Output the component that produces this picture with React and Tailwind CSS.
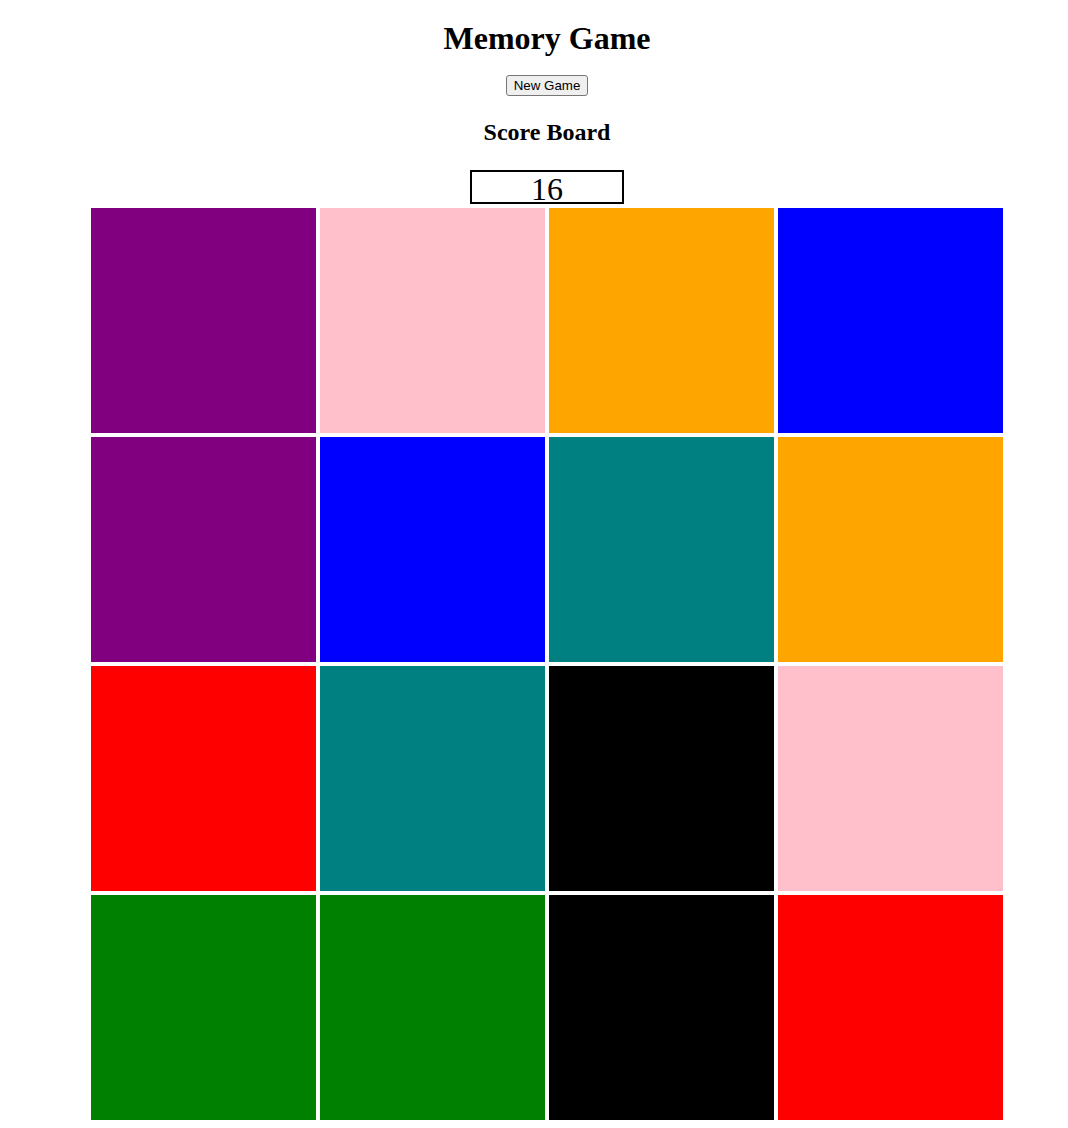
const cards = [
  'bg-[#800080]', 'bg-[#ffc0cb]', 'bg-[#ffa500]', 'bg-[#0000ff]',
  'bg-[#800080]', 'bg-[#0000ff]', 'bg-[#008080]', 'bg-[#ffa500]',
  'bg-[#ff0000]', 'bg-[#008080]', 'bg-[#000000]', 'bg-[#ffc0cb]',
  'bg-[#008000]', 'bg-[#008000]', 'bg-[#000000]', 'bg-[#ff0000]',
];

const App = () => {
  return (
    <div className="min-h-screen bg-white text-black font-['Liberation_Serif',serif]">
      <div className="ml-[26px] flex flex-col items-center">
        {/* Header */}
        <h1 className="pt-[20px] text-[32px] leading-[37px] font-bold">Memory Game</h1>
        <button className="mt-[18px] h-[21px] px-[7px] text-[13.33px] leading-[15px] font-['Liberation_Sans',sans-serif] bg-[#efefef] border border-[#767676] rounded-[3px]">
          New Game
        </button>

        {/* Score */}
        <h2 className="mt-[22px] text-[24px] leading-[28px] font-bold">Score Board</h2>
        <div className="mt-[24px] w-[154px] h-[34px] border-2 border-black text-center text-[32px] leading-[34px]">
          16
        </div>

        {/* Board */}
        <div className="mt-[4px] grid grid-cols-4 gap-[4px] w-[912px]">
          {cards.map((c, i) => (
            <div key={i} className={`${c} h-[225px]`} />
          ))}
        </div>
      </div>
    </div>
  );
};

export default App;
